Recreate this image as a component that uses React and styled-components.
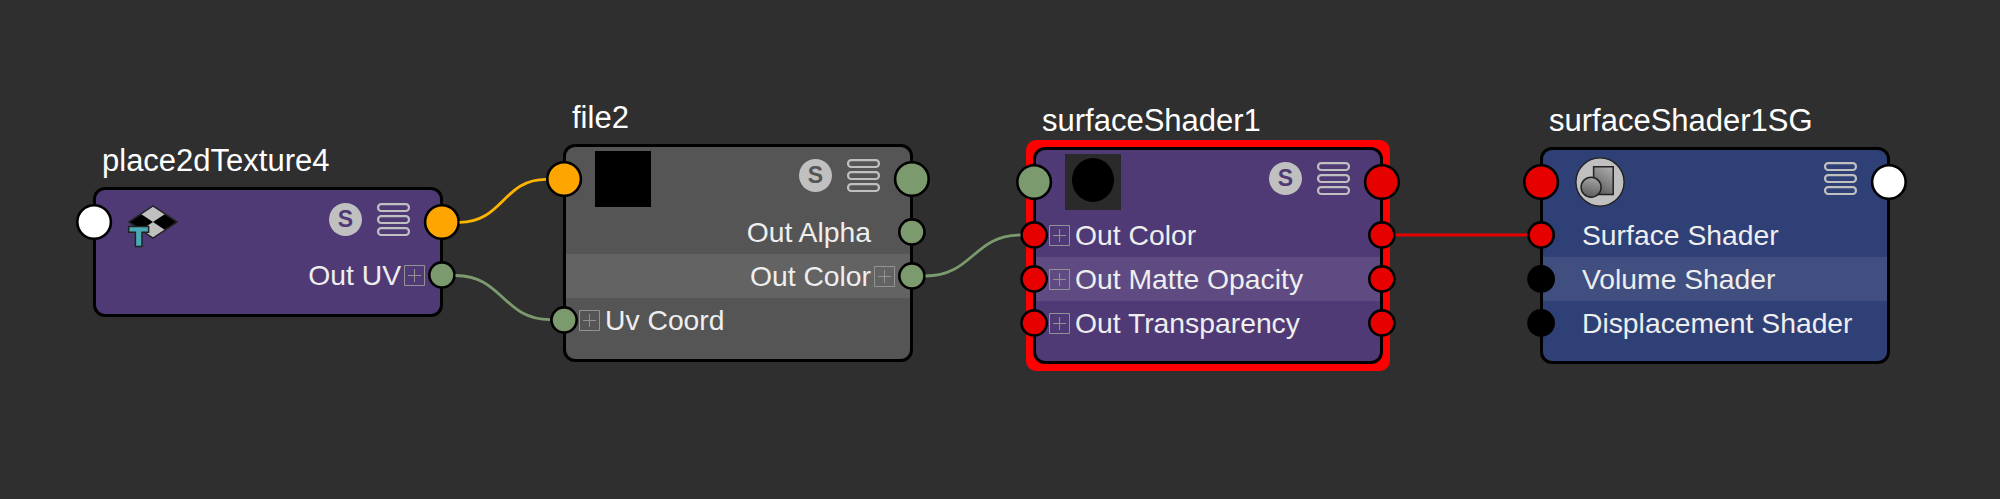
import React from "react";
import styled, { createGlobalStyle } from "styled-components";

const GlobalStyle = createGlobalStyle`
  * { box-sizing: border-box; }
  body { margin: 0; background: #2f2f2f; }
`;

const Canvas = styled.main`
  position: relative;
  width: 2000px;
  height: 499px;
  overflow: hidden;
  background: #2f2f2f;
  font-family: "Liberation Sans", Arial, sans-serif;
`;

const Wires = styled.svg`
  position: absolute;
  inset: 0;
  width: 100%;
  height: 100%;
  fill: none;
  stroke-width: 2.8;
`;

const NodeFrame = styled.section`
  position: absolute;
  left: ${(p) => p.$x}px;
  top: ${(p) => p.$y}px;
  display: flex;
  flex-direction: column;
  gap: 8px;
  width: 350px;
`;

const Title = styled.h2`
  margin: 0;
  padding-left: 9px;
  font-size: 31px;
  font-weight: 400;
  line-height: 36px;
  white-space: nowrap;
  color: #fff;
`;

const Halo = styled.div`
  margin: ${(p) => (p.$selected ? "-7px" : 0)};
  padding: ${(p) => (p.$selected ? "7px" : 0)};
  border-radius: 10px;
  background: ${(p) => (p.$selected ? "#f00" : "transparent")};
`;

const Body = styled.div`
  display: flex;
  flex-direction: column;
  padding-bottom: ${(p) => p.$foot}px;
  border: 3px solid #000;
  border-radius: 12px;
  background: ${(p) => p.$color};
`;

const Header = styled.header`
  display: flex;
  align-items: center;
  height: 63px;
  padding-top: 1px;
`;

const HeaderContent = styled.div`
  display: flex;
  flex: 1;
  align-items: flex-start;
  justify-content: space-between;
  height: 62px;
  padding: 3px 30px 0 29px;
`;

const Tools = styled.div`
  display: flex;
  gap: 15px;
  padding-top: ${(p) => p.$top}px;
`;

const SoloBadge = styled.span`
  width: 33px;
  height: 33px;
  border-radius: 50%;
  background: #c0c0c0;
  color: ${(p) => p.$color};
  font-size: 23px;
  font-weight: 700;
  line-height: 33px;
  text-align: center;
`;

const StackSvg = styled.svg`
  width: 33px;
  height: 34px;
  fill: none;
  stroke: #c0c0c0;
  stroke-width: 2.2;
`;

const Swatch = styled.div`
  display: flex;
  justify-content: center;
  width: 56px;
  height: 56px;
  padding-top: 4px;
  background: ${(p) => p.$color};
`;

const Ball = styled.div`
  width: 42px;
  height: 44px;
  border-radius: 50%;
  background: #000;
`;

const Row = styled.div`
  display: flex;
  align-items: center;
  height: 44px;
  background: ${(p) => p.$lit || "transparent"};
`;

const RowContent = styled.div`
  display: flex;
  flex: 1;
  align-items: center;
  justify-content: ${(p) => (p.$output ? "flex-end" : "flex-start")};
  gap: ${(p) => (p.$output ? 3 : 5)}px;
  padding: 0 ${(p) => (p.$output && !p.$expand ? 39 : 15)}px 0
    ${(p) => (!p.$output && !p.$expand ? 39 : 13)}px;
`;

const Label = styled.span`
  font-size: 28.3px;
  line-height: 44px;
  white-space: nowrap;
  color: #eee;
`;

const ExpanderSvg = styled.svg`
  flex: none;
  width: 21px;
  height: 21px;
  fill: none;
  stroke: #929292;
  stroke-width: 1;
`;

const PortSvg = styled.svg`
  position: relative;
  flex: none;
  width: 40px;
  height: 40px;
  margin: ${(p) => (p.$side === "left" ? "0 -18px 0 -22px" : "0 -22px 0 -18px")};
  stroke: #000;
  stroke-width: 2.6;
`;

const COLORS = {
  white: "#fff",
  orange: "#ffa500",
  green: "#7b9a6d",
  red: "#e60000",
  black: "#000",
};

function Port({ side, color, large }) {
  return (
    <PortSvg $side={side} viewBox="0 0 40 40">
      <circle cx={side === "left" ? 20.1 : 19.9} cy="20" r={large ? 16.8 : 12.6} fill={COLORS[color]} />
    </PortSvg>
  );
}

function Expander() {
  return (
    <ExpanderSvg viewBox="0 0 21 21">
      <path d="M.5.5H20.5V20.5H.5ZM4 10.5H17M10.5 4V17" />
    </ExpanderSvg>
  );
}

function StackIcon() {
  return (
    <StackSvg viewBox="0 0 33 34">
      {[1.1, 13.1, 25.1].map((y) => (
        <rect key={y} x="1.1" y={y} width="30.8" height="6.9" rx="3.1" />
      ))}
    </StackSvg>
  );
}

const IconSvg = styled.svg`
  flex: none;
  width: 56px;
  height: 56px;
  stroke: #222;
  stroke-linejoin: round;
`;

function PlacementIcon() {
  return (
    <IconSvg viewBox="0 3 56 56">
      <path d="M4 31 28 15 52 31 28 47Z" fill="#000" strokeWidth="1.4" />
      <path d="M28 15 40 23 28 31 16 23ZM28 31 40 39 28 47 16 39Z" fill="#c0c0c0" stroke="none" />
      <path d="M4 31 28 15 52 31 28 47Z" fill="none" strokeWidth="1.4" />
      <path d="M3.7 35.5H23.6V41.2H17V55.5H10.4V41.2H3.7Z" fill="#49a9b6" strokeWidth="1.5" strokeLinejoin="miter" />
    </IconSvg>
  );
}

function ShadingGroupIcon() {
  return (
    <IconSvg viewBox="0 0 56 56">
      <defs>
        <linearGradient id="sheet" x1="0.8" y1="0" x2="0.3" y2="1">
          <stop offset="0" stopColor="#ababab" />
          <stop offset="1" stopColor="#5c5c5c" />
        </linearGradient>
        <linearGradient id="disc" x1="0.6" y1="0" x2="0.4" y2="1">
          <stop offset="0" stopColor="#a5a5a5" />
          <stop offset="1" stopColor="#5c5c5c" />
        </linearGradient>
      </defs>
      <circle cx="28" cy="28" r="24.1" fill="#c0c0c0" strokeWidth="1.4" />
      <path d="M21.6 12.8H41.2V40.5H21.6Z" fill="url(#sheet)" strokeWidth="1.5" strokeLinejoin="miter" />
      <circle cx="19.1" cy="33.2" r="10" fill="url(#disc)" strokeWidth="1.5" />
    </IconSvg>
  );
}

function Node({ x, y, title, color, lit, selected, solo = true, inPort, outPort, icon, toolsTop = 8, foot = 16, rows }) {
  return (
    <NodeFrame $x={x} $y={y}>
      <Title>{title}</Title>
      <Halo $selected={selected}>
        <Body $color={color} $foot={foot}>
          <Header>
            <Port side="left" color={inPort} large />
            <HeaderContent>
              {icon}
              <Tools $top={toolsTop}>
                {solo && <SoloBadge $color={color}>S</SoloBadge>}
                <StackIcon />
              </Tools>
            </HeaderContent>
            <Port side="right" color={outPort} large />
          </Header>
          {rows.map((r) => (
            <Row key={r.label} $lit={r.lit && lit}>
              {r.left && <Port side="left" color={r.left} />}
              <RowContent $output={r.output} $expand={r.expand}>
                {r.expand && !r.output && <Expander />}
                <Label>{r.label}</Label>
                {r.expand && r.output && <Expander />}
              </RowContent>
              {r.right && <Port side="right" color={r.right} />}
            </Row>
          ))}
        </Body>
      </Halo>
    </NodeFrame>
  );
}

export default function App() {
  return (
    <>
      <GlobalStyle />
      <Canvas>
        <Node
          x={93} y={143} title="place2dTexture4" color="#4f3a76" foot={17}
          inPort="white" outPort="orange" icon={<PlacementIcon />} toolsTop={9}
          rows={[{ label: "Out UV", output: true, expand: true, right: "green" }]}
        />
        <Node
          x={563} y={100} title="file2" color="#555" lit="#636363" foot={17}
          inPort="orange" outPort="green" icon={<Swatch $color="#000" />}
          rows={[
            { label: "Out Alpha", output: true, right: "green" },
            { label: "Out Color", output: true, expand: true, lit: true, right: "green" },
            { label: "Uv Coord", expand: true, left: "green" },
          ]}
        />
        <Node
          x={1033} y={103} title="surfaceShader1" color="#4f3a76" lit="#5f4b82" selected
          inPort="green" outPort="red" icon={<Swatch $color="#2a2a2a"><Ball /></Swatch>}
          rows={[
            { label: "Out Color", expand: true, left: "red", right: "red" },
            { label: "Out Matte Opacity", expand: true, lit: true, left: "red", right: "red" },
            { label: "Out Transparency", expand: true, left: "red", right: "red" },
          ]}
        />
        <Node
          x={1540} y={103} title="surfaceShader1SG" color="#2f4076" lit="#414f80" solo={false}
          inPort="red" outPort="white" icon={<ShadingGroupIcon />}
          rows={[
            { label: "Surface Shader", left: "red" },
            { label: "Volume Shader", lit: true, left: "black" },
            { label: "Displacement Shader", left: "black" },
          ]}
        />
        <Wires viewBox="0 0 2000 499">
          <path d="M459.5 222.3C503 222.3 503 179.3 546 179.3" stroke="#ffb400" />
          <path d="M455.5 275.5C503 275.5 503 319.7 550 319.7" stroke="#7b9a6d" />
          <path d="M925.5 276C973 276 973 235 1020.5 235" stroke="#7b9a6d" />
          <path d="M1395.5 235H1527.5" stroke="#e60000" />
        </Wires>
      </Canvas>
    </>
  );
}
